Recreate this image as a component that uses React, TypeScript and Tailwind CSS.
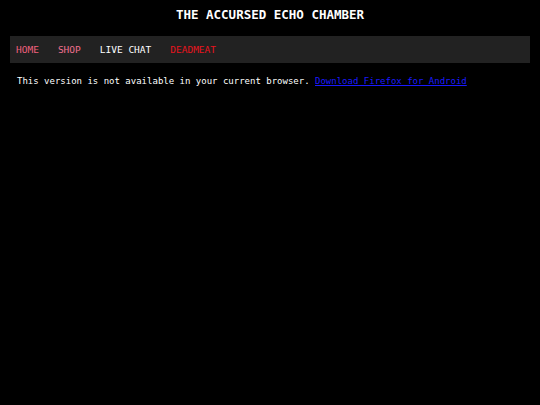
export default function App() {
  return (
    <div className="min-h-[405px] w-full bg-black text-white" style={{ fontFamily: '"DejaVu Sans Mono", monospace' }}>
      <div className="px-[10px]">
        <h1 className="h-[32px] pt-[7px] text-center text-[12.5px] font-bold leading-[16px] text-white">THE ACCURSED ECHO CHAMBER</h1>
        <nav className="mt-[4px] flex h-[27px] items-center gap-[19px] bg-[#222222] px-[6px] text-[9.5px] leading-[12px]">
          <span className="text-[#f0607e]">HOME</span>
          <span className="text-[#f0708e]">SHOP</span>
          <span className="text-white">LIVE CHAT</span>
          <span className="text-[#e8141e]">DEADMEAT</span>
        </nav>
        <p className="mt-[12px] pl-[7px] text-[9px] leading-[12px] text-white">
          This version is not available in your current browser.{" "}
          <a href="#" className="text-[#1a1aff] underline">Download Firefox for Android</a>
        </p>
      </div>
    </div>
  );
}
